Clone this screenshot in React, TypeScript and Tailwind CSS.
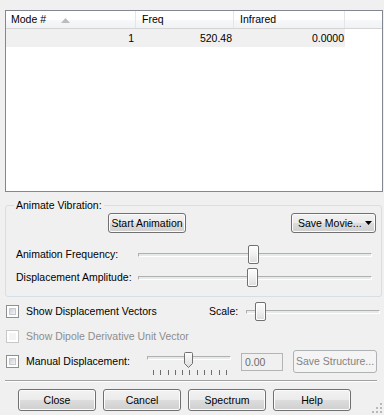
import React from "react";

const btn =
  "flex items-center justify-center rounded-[3px] border border-[#707070] bg-[linear-gradient(to_bottom,#f2f2f2_0%,#ebebeb_50%,#dddddd_50%,#cfcfcf_100%)] shadow-[inset_0_0_0_1px_#fcfcfc] text-black";

function Slider({ width, left, thumbW = 11 }: { width: number; left: number; thumbW?: number }) {
  return (
    <div className="relative h-[19px] flex items-center" style={{ width }}>
      <div className="w-full h-[4px] border border-[#b0b0b0] border-b-[#ffffff] border-r-[#ffffff] bg-[#e7eaea]" />
      <div
        className="absolute top-0 h-[19px] rounded-[2px] border border-[#707070] bg-[linear-gradient(to_bottom,#fdfdfd_0%,#f0f0f0_50%,#dcdcdc_100%)] shadow-[inset_0_0_0_1px_#ffffff]"
        style={{ left, width: thumbW }}
      />
    </div>
  );
}

function Checkbox({ disabled = false }: { disabled?: boolean }) {
  return (
    <div
      className={
        "w-[13px] h-[13px] shrink-0 border p-[2px] bg-white " +
        (disabled ? "border-[#c8c8c8]" : "border-[#8e8f8f]")
      }
    >
      <div
        className={
          "w-full h-full " +
          (disabled
            ? "bg-[#f4f4f4]"
            : "bg-[linear-gradient(135deg,#cbcfd5_0%,#f6f6f6_100%)] border border-[#c6c9ce]")
        }
      />
    </div>
  );
}

export default function App() {
  return (
    <div
      className="w-[384px] h-[415px] bg-[#f0f0f0] text-[10.5px] leading-[13px] text-black relative overflow-hidden"
      style={{ fontFamily: '"Liberation Sans", Arial, sans-serif' }}
    >
      {/* Table */}
      <div className="ml-[5px] pt-[10px]">
        <div className="w-[378px] h-[182px] border border-[#828790] bg-white flex flex-col">
          <div className="flex h-[18px] bg-[linear-gradient(to_bottom,#ffffff_0%,#ffffff_50%,#f7f8fa_50%,#f1f2f4_100%)] border-b border-[#d5d5d5]">
            <div className="w-[130px] border-r border-[#e3e5e8] flex items-center pl-[5px] relative">
              Mode #
              <svg className="absolute left-[55px] top-[7px]" width="9" height="5" viewBox="0 0 9 5">
                <polygon points="0,5 4.5,0 9,5" fill="#bcbcbc" />
              </svg>
            </div>
            <div className="w-[98px] border-r border-[#e3e5e8] flex items-center pl-[6px]">Freq</div>
            <div className="w-[111px] border-r border-[#e3e5e8] flex items-center pl-[6px]">Infrared</div>
            <div className="flex-1" />
          </div>
          <div className="flex h-[18px]">
            <div className="w-[339px] flex bg-[#f0f0f0]">
              <div className="w-[130px] flex items-center justify-end pr-[2px]">1</div>
              <div className="w-[98px] flex items-center justify-end pr-[2px]">520.48</div>
              <div className="w-[111px] flex items-center justify-end pr-[1px]">0.0000</div>
            </div>
          </div>
        </div>
      </div>

      {/* Group box */}
      <div className="ml-[5px] mt-[13px] w-[377px] h-[92px] border border-[#d5dfe5] rounded-[3px] relative">
        <div className="absolute left-[8px] top-[-7px] px-[2px] bg-[#f0f0f0] leading-[13px]">Animate Vibration:</div>
        <div className="flex mt-[7px] h-[20px]">
          <div className={btn + " ml-[102px] w-[78px] h-[20px]"}>Start Animation</div>
          <div className={btn + " ml-auto mr-[5px] w-[85px] h-[20px] justify-start pl-[6px] gap-[3px]"}>
            <span>Save Movie...</span>
            <svg width="7" height="4" viewBox="0 0 7 4">
              <polygon points="0,0 7,0 3.5,4" fill="#000" />
            </svg>
          </div>
        </div>
        <div className="flex items-center mt-[12px] h-[19px]">
          <div className="w-[132px] pl-[10px]">Animation Frequency:</div>
          <Slider width={234} left={110} />
        </div>
        <div className="flex items-center mt-[4px] h-[19px]">
          <div className="w-[132px] pl-[10px]">Displacement Amplitude:</div>
          <Slider width={234} left={109} />
        </div>
      </div>

      {/* Checkbox rows */}
      <div className="flex items-center mt-[5px] h-[19px]">
        <div className="w-[209px] flex items-center pl-[6px] gap-[7px]">
          <Checkbox />
          <span>Show Displacement Vectors</span>
        </div>
        <div className="w-[37px]">Scale:</div>
        <Slider width={134} left={9} />
      </div>

      <div className="flex items-center mt-[6px] h-[18px] pl-[6px] gap-[7px] text-[#8d8d8d]">
        <Checkbox disabled />
        <span>Show Dipole Derivative Unit Vector</span>
      </div>

      <div className="flex items-start mt-[5px] h-[26px]">
        <div className="w-[147px] flex items-center pl-[6px] gap-[7px] mt-[5px]">
          <Checkbox />
          <span>Manual Displacement:</span>
        </div>
        <div className="relative w-[84px] h-[26px]">
          <div className="absolute left-0 top-[6px] w-[84px] h-[4px] border border-[#b0b0b0] border-b-[#ffffff] border-r-[#ffffff] bg-[#e7eaea]" />
          <svg className="absolute left-[37px] top-[2px]" width="9" height="16" viewBox="0 0 9 16">
            <defs>
              <linearGradient id="tg" x1="0" y1="0" x2="0" y2="1">
                <stop offset="0" stopColor="#fdfdfd" />
                <stop offset="1" stopColor="#dcdcdc" />
              </linearGradient>
            </defs>
            <path d="M0.5 1.5 Q0.5 0.5 1.5 0.5 L7.5 0.5 Q8.5 0.5 8.5 1.5 L8.5 11.5 L4.5 15.5 L0.5 11.5 Z" fill="url(#tg)" stroke="#707070" />
          </svg>
          <div className="absolute left-[6px] top-[20px] w-[74px] h-[5px] flex justify-between">
            {Array.from({ length: 11 }).map((_, i) => (
              <div key={i} className="w-[1px] h-[5px] bg-[#6d6d6d]" />
            ))}
          </div>
        </div>
        <div className="ml-[10px] mt-[3px] w-[42px] h-[18px] border border-[#b4b4b4] bg-[#f0f0f0] text-[#6d6d6d] flex items-center pl-[3px]">
          0.00
        </div>
        <div className="ml-[10px] w-[84px] h-[23px] rounded-[3px] border border-[#adb2b5] bg-[#f4f4f4] text-[#838383] flex items-center justify-center">
          Save Structure...
        </div>
      </div>

      {/* Separator */}
      <div className="ml-[5px] mt-[4px] w-[372px] h-[2px] border-t border-[#a0a0a0] border-b border-b-[#ffffff]" />

      {/* Bottom buttons */}
      <div className="flex gap-[7px] ml-[18px] mt-[7px]">
        <div className={btn + " w-[78px] h-[22px]"}>Close</div>
        <div className={btn + " w-[78px] h-[22px]"}>Cancel</div>
        <div className={btn + " w-[78px] h-[22px]"}>Spectrum</div>
        <div className={btn + " w-[78px] h-[22px]"}>Help</div>
      </div>

      {/* Size grip */}
      <svg className="absolute right-[2px] bottom-[2px]" width="10" height="10" viewBox="0 0 10 10">
        {[
          [8, 0],
          [8, 4],
          [4, 4],
          [8, 8],
          [4, 8],
          [0, 8],
        ].map(([x, y], i) => (
          <rect key={i} x={x} y={y} width="2" height="2" fill="#b8b8b8" />
        ))}
      </svg>
    </div>
  );
}
